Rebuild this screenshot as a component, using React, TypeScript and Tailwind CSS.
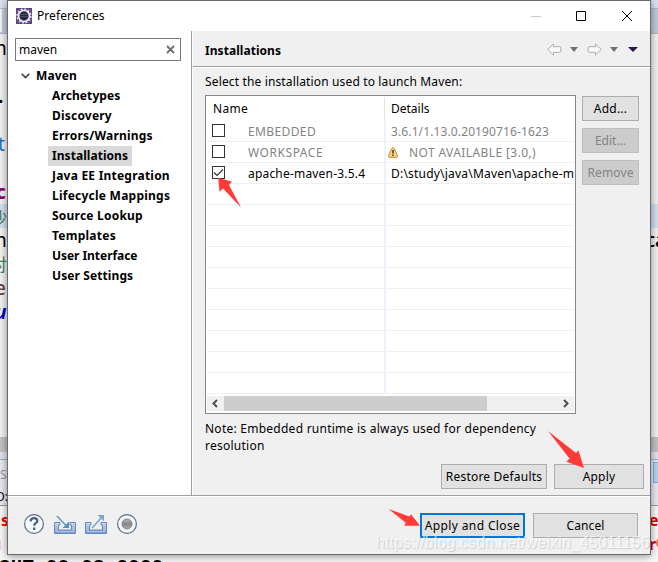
import React from "react";

const ui = "font-['Noto_Sans',sans-serif]";

const treeItems: { label: string; cls: string }[] = [
  { label: "Archetypes", cls: "w-[68px] tracking-[0.1px]" },
  { label: "Discovery", cls: "w-[60px] tracking-[0.2px]" },
  { label: "Errors/Warnings", cls: "w-[101px] tracking-[0.2px]" },
  { label: "Installations", cls: "w-[76px] tracking-[0.05px]" },
  { label: "Java EE Integration", cls: "w-[118px] tracking-[0.22px]" },
  { label: "Lifecycle Mappings", cls: "w-[118px] tracking-[0.24px]" },
  { label: "Source Lookup", cls: "w-[91px] tracking-[0.22px]" },
  { label: "Templates", cls: "w-[64px] tracking-[0.25px]" },
  { label: "User Interface", cls: "w-[85px] tracking-[-0.05px]" },
  { label: "User Settings", cls: "w-[81px] tracking-[0.1px]" },
];

function Btn({ children, className = "border border-[#adadad] bg-[#e1e1e1]" }: { children: React.ReactNode; className?: string }) {
  return (
    <button className={`flex h-[25px] items-center justify-center whitespace-nowrap pt-px ${className}`}>
      {children}
    </button>
  );
}

function Check({ on = false }: { on?: boolean }) {
  return (
    <span className="mb-px block size-[13px] shrink-0 border border-[#333] bg-white">
      {on && (
        <svg viewBox="0 0 11 11" className="block size-[11px]">
          <path d="M1 5.500l3 3L10 2.500" fill="none" stroke="#333" strokeWidth="1.2" />
        </svg>
      )}
    </span>
  );
}

function BackArrow({ flip = false }: { flip?: boolean }) {
  return (
    <svg viewBox="0 0 15 13" className={`h-[13px] w-[15px] ${flip ? "-scale-x-100" : ""}`}>
      <path d="M.8 6.500L6.500.9v2.800h6q1.400 0 1.400 1.200v3.200q0 1.200-1.400 1.200h-6v2.800z" fill="#f8f8f8" stroke="#adadad" />
    </svg>
  );
}

function Caret({ color, wide = false }: { color: string; wide?: boolean }) {
  return (
    <svg viewBox="0 0 9 5" preserveAspectRatio="none" className={`h-[5px] ${wide ? "w-[10px]" : "w-[8px]"}`}>
      <path d="M0 0h9L4.500 5z" fill={color} />
    </svg>
  );
}

function Background() {
  return (
    <div className="absolute inset-0 overflow-hidden bg-[#f0f0f0] text-[19px] leading-[24px]">
      <div className="h-[8px] bg-[#dbe0f0]" />
      <div className="h-[26px] border-y border-[#b4bac6] bg-[#bccbdb]" />
      <div className="h-[170px] bg-[#f2f2f2]" />
      <div className="h-[24px] bg-[#d4e0ee]" />
      <div className="h-[209px] bg-[#f2f2f2]" />
      <div className="h-[15px] bg-[#c2c2c2]" />
      <div className="h-[8px] border-b border-[#a8afbf] bg-[#dfe3ee]" />
      <div className="h-[46px] border-b border-[#999] bg-[#e7eaf3]" />
      <div className="h-[56px] bg-[#f8f8f8]" />
      <div className="absolute left-0 top-[9px] h-[23px] w-[2px] bg-[#f2f2f2]" />
      <span className="absolute left-[-5px] top-[36px]">n</span>
      <span className="absolute left-[-2px] top-[84px] font-bold">.</span>
      <span className="absolute left-[-2px] top-[132px] text-[#1a70d0]">t</span>
      <span className="absolute left-[-4px] top-[180px] font-bold text-[#8b006b]">c</span>
      <span className="absolute left-[-10px] top-[205px] font-['Noto_Sans_CJK_SC',sans-serif] text-[17px] text-[#3f7f5f]">沙</span>
      <span className="absolute left-[-5px] top-[228px]">n</span>
      <span className="absolute left-[-10px] top-[252px] font-['Noto_Sans_CJK_SC',sans-serif] text-[17px] text-[#3f7f5f]">对</span>
      <span className="absolute left-[-5px] top-[276px] font-medium text-[#6a3e3e]">e</span>
      <span className="absolute left-[-5px] top-[300px] font-bold italic text-[#0000c0]">u</span>
      <span className="absolute left-0 top-[463px] text-[12px] text-[#999]">S</span>
      <span className="absolute left-[-4px] top-[485px] text-[12px]">D:</span>
      <span className="absolute left-[1px] top-[508px] text-[16px] font-bold text-[#f00]">s</span>
      <span className="absolute left-0 top-[540px] h-[10px] w-px bg-[#f7c6f5]" />
      <span className="absolute left-[646px] top-[228px] font-medium">c</span>
      <span className="absolute left-[655px] top-[228px] font-medium">a</span>
      <div className="absolute left-[653px] top-[462px] h-[21px] w-[10px] border border-[#7fb0dc] bg-[#b4d4f2]" />
      <span className="absolute left-[649px] top-[508px] text-[16px] font-bold text-[#e00000]">e</span>
      <span className="absolute left-[649px] top-[532px] text-[16px] font-bold text-[#e00000]">r</span>
      <span className="absolute left-[656px] top-[537px] h-[12px] w-[6px] rounded-l-full bg-[#ff7032]" />
      <span className="absolute left-[-1px] top-[555px] whitespace-pre font-['Liberation_Mono',monospace] text-[19px] font-bold tracking-[0.35px]">SHT 03 08 2020</span>
    </div>
  );
}

function FooterIcons() {
  return (
    <svg viewBox="23 513 116 22" className="h-[22px] w-[116px]" fill="none">
      <defs>
        <linearGradient id="tray" x1="0" y1="0" x2="0" y2="1">
          <stop stopColor="#d6e0f0" />
          <stop offset="1" stopColor="#7c9ccb" />
        </linearGradient>
        <linearGradient id="knob" x1="0" y1="0" x2="0" y2="1">
          <stop stopColor="#bababa" />
          <stop offset=".5" stopColor="#858585" />
          <stop offset="1" stopColor="#b0b0b0" />
        </linearGradient>
      </defs>
      <circle cx="34" cy="524" r="9.400" fill="#f5f7fb" stroke="#586d91" strokeWidth="1.200" />
      <path d="M30.600 521.300q.3-3.200 3.500-3.200 3.200 0 3.200 2.700 0 1.500-1.700 2.500-1.400.8-1.400 2.400M34.200 527.500v2.400" stroke="#4b5f86" strokeWidth="2.200" />
      {[54, 85].map((x) => (
        <g key={x} transform={`translate(${x} 522)`}>
          <path d="M.5.500h5.500v2.500H4.500v5h13V3H16V.5h5.500v11H.5z" fill="url(#tray)" stroke="#6787bd" />
          <path d="M2.500 2.500v7h17v-7" stroke="#a9c0e0" />
        </g>
      ))}
      <path d="M57 516l10 10.500" stroke="#5c9dc0" strokeWidth="1.500" />
      <path d="M69 521.500v6.500h-6.500z" fill="#4f94b8" />
      <path d="M92 528l9.500-10.500" stroke="#6da5cc" strokeWidth="1.500" />
      <path d="M97.500 515h6.500v6.500z" fill="#78a9d2" />
      <circle cx="127" cy="524" r="9.400" fill="#f7f7f7" stroke="#586d91" strokeWidth="1.200" />
      <circle cx="127" cy="524" r="5" fill="url(#knob)" stroke="#858585" />
    </svg>
  );
}

export default function App() {
  return (
    <div className={`relative h-[562px] w-[658px] overflow-hidden text-[12px] leading-[18px] text-black ${ui}`}>
      <Background />
      <div className="relative ml-[7px] flex h-[555px] w-[644px] flex-col border border-[#6b686e] bg-[#f0f0f0] shadow-[0_1px_8px_rgba(0,0,0,0.45)]">
        <header className="flex h-[30px] shrink-0 items-center bg-white pl-[8px]">
          <svg viewBox="0 0 16 16" className="size-4">
            <rect width="16" height="16" fill="#5b4884" />
            <circle cx="8" cy="8" r="5.500" fill="#2b2648" stroke="#f0edf0" strokeWidth="1.700" />
            <circle cx="8" cy="8" r="6.900" fill="none" stroke="#e6e3e8" strokeWidth="1.400" strokeDasharray="2 1.610" />
            <path d="M4 6.500h8M4 8.500h8" stroke="#69648c" strokeWidth=".6" />
          </svg>
          <span className="ml-[5px] tracking-[0.07px]">Preferences</span>
          <svg viewBox="0 0 104 12" className="ml-auto mr-[15px] h-[12px] w-[104px]">
            <path d="M0 6.500h10" stroke="#c8c8c8" />
            <path d="M45.500 1.500h9v9h-9z" fill="none" stroke="#000" />
            <path d="M91 1l10 10M101 1l-10 10" stroke="#000" />
          </svg>
        </header>
        <div className="flex h-[464px] shrink-0">
          <aside className="w-[184px] shrink-0 border-r border-[#a0a0a0] bg-white pt-[7px]">
            <div className="ml-[7px] flex h-[23px] w-[166px] items-center border border-[#7a7a7a] pl-[3px] pr-[5px]">
              <span>maven</span>
              <svg viewBox="0 0 9 9" className="ml-auto size-[9px]">
                <path d="M1 1l7 7M8 1L1 8" stroke="#6e6e6e" strokeWidth="1.800" />
              </svg>
            </div>
            <div className="mt-[5px] font-bold">
              <div className="flex h-5 items-center pl-[13px]">
                <svg viewBox="0 0 9 6" className="h-[6px] w-[9px]">
                  <path d="M.7.8l3.800 3.800L8.300.8" fill="none" stroke="#404040" strokeWidth="1.600" />
                </svg>
                <span className="ml-[6px] tracking-[0.1px]">Maven</span>
              </div>
              {treeItems.map((t) => (
                <div key={t.label} className="flex h-5 items-center pl-[40px]">
                  <span className={`box-content whitespace-nowrap px-1 leading-[20px] ${t.cls} ${t.label === "Installations" ? "bg-[#d9d9d9]" : ""}`}>
                    {t.label}
                  </span>
                </div>
              ))}
            </div>
          </aside>
          <main className="flex min-w-0 flex-1 flex-col border-l border-white">
            <div className="flex h-[36px] items-center border-b border-[#a0a0a0] pl-[12px] pr-[12px]">
              <h1 className="pt-[4px] font-bold tracking-[0.05px]">Installations</h1>
              <div className="ml-auto flex items-center pt-px">
                <span className="-ml-px"><BackArrow /></span>
                <span className="ml-[8px]"><Caret color="#707070" /></span>
                <span className="ml-[9px]"><BackArrow flip /></span>
                <span className="ml-[8px]"><Caret color="#707070" /></span>
                <span className="ml-[10px]"><Caret color="#2d1650" wide /></span>
              </div>
            </div>
            <div className="border-t border-white pl-[12px] pt-[5px]">
              <p className="h-[22px] tracking-[0.145px]">Select the installation used to launch Maven:</p>
              <div className="flex">
                <div className="h-[319px] w-[371px] shrink-0 border border-[#828790] bg-white p-px">
                  <div className="flex h-[24px] items-center">
                    <span className="w-[177px] pl-[6px] tracking-[0.3px]">Name</span>
                    <span className="h-full border-l border-[#e5e5e5] pl-[6px] leading-[24px]">Details</span>
                  </div>
                  <div className="grid grid-cols-[177px_190px] whitespace-nowrap">
                    <div className="flex h-[21px] items-center border-b border-[#f0f0f0] pl-[5px] text-[#838383]"><Check /><span className="ml-[23px] pt-px tracking-[0.38px]">EMBEDDED</span></div>
                    <div className="flex h-[21px] items-center overflow-hidden border-b border-l-2 border-b-[#f0f0f0] border-l-[#edf3fc] pl-[5px] pt-px tracking-[0.12px] text-[#838383]">3.6.1/1.13.0.20190716-1623</div>
                    <div className="flex h-[21px] items-center border-b border-[#f0f0f0] pl-[5px] text-[#838383]"><Check /><span className="ml-[23px] pt-[2px] tracking-[0.55px]">WORKSPACE</span></div>
                    <div className="flex h-[21px] items-center overflow-hidden border-b border-l-2 border-b-[#f0f0f0] border-l-[#edf3fc] pl-[2px] text-[#838383]">
                      <svg viewBox="0 0 10 11" className="h-[11px] w-[10px]">
                        <path d="M3.800 1.500Q5-.3 6.200 1.500L9.300 8.200Q9.800 10.400 8.300 10.400H1.700Q.2 10.400.7 8.200z" fill="#f6d68a" stroke="#c28a2c" />
                        <path d="M5 3v3.600M5 7.600v1.400" stroke="#4a3510" strokeWidth="1.500" />
                      </svg>
                      <span className="ml-[11px] pt-[2px] tracking-[0.4px]">NOT AVAILABLE [3.0,)</span>
                    </div>
                    <div className="flex h-[21px] items-center border-b border-[#f0f0f0] pl-[5px]"><Check on /><span className="ml-[23px] pt-[2px] tracking-[0.19px]">apache-maven-3.5.4</span></div>
                    <div className="flex h-[21px] items-center overflow-hidden border-b border-l-2 border-b-[#f0f0f0] border-l-[#edf3fc] pl-[5px] pt-[2px] tracking-[0.21px]">D:\study\java\Maven\apache-m</div>
                    {Array.from({ length: 10 }, (_, i) => (
                      <React.Fragment key={i}>
                        <div className="h-[21px] border-b border-[#f0f0f0]" />
                        <div className="h-[21px] border-b border-l-2 border-b-[#f0f0f0] border-l-[#edf3fc]" />
                      </React.Fragment>
                    ))}
                  </div>
                  <div className="mt-[2px] flex h-[15px] items-center bg-[#f0f0f0]">
                    <svg viewBox="0 0 17 15" className="h-[15px] w-[17px]"><path d="M10 4L6.500 7.500 10 11" fill="none" stroke="#505050" strokeWidth="2" /></svg>
                    <div className="h-full w-[263px] bg-[#cdcdcd]" />
                    <svg viewBox="0 0 17 15" className="ml-auto h-[15px] w-[17px]"><path d="M7 4l3.500 3.500L7 11" fill="none" stroke="#505050" strokeWidth="2" /></svg>
                  </div>
                </div>
                <div className="ml-[6px] flex w-[57px] flex-col gap-[7px] pt-px">
                  <Btn className="border border-[#adadad] bg-[#e1e1e1] tracking-[0.2px]">Add...</Btn>
                  <Btn className="border border-[#bfbfbf] bg-[#cccccc] text-[#838383]">Edit...</Btn>
                  <Btn className="border border-[#bfbfbf] bg-[#cccccc] tracking-[0.15px] text-[#838383]">Remove</Btn>
                </div>
              </div>
              <p className="mt-[5px] w-[360px] pt-px leading-[17px] tracking-[0.25px]">Note: Embedded runtime is always used for dependency<br />resolution</p>
              <div className="mt-[10px] flex justify-end gap-[7px] pr-[6px]">
                <Btn className="w-[106px] border border-[#adadad] bg-[#e1e1e1] tracking-[0.2px]">Restore Defaults</Btn>
                <Btn className="w-[90px] border border-[#adadad] bg-[#e1e1e1] tracking-[0.2px]">Apply</Btn>
              </div>
            </div>
          </main>
        </div>
        <footer className="flex flex-1 items-start border-t border-[#a0a0a0] pl-[15px] pr-[12px] pt-[17px] shadow-[inset_0_1px_0_#fff]">
          <FooterIcons />
          <div className="ml-auto flex gap-[8px]">
            <Btn className="w-[105px] border-2 border-[#0078d7] bg-[#e1e1e1] tracking-[0.37px]">Apply and Close</Btn>
            <Btn className="w-[105px] border border-[#adadad] bg-[#e1e1e1] tracking-[0.1px]">Cancel</Btn>
          </div>
        </footer>
      </div>
      <svg viewBox="0 0 658 562" className="pointer-events-none absolute inset-0 h-[562px] w-[658px]" fill="#ff3b38">
        <path d="M218.300 177.800L232 181.700L229 185L241 207.500L223 188.500L219.500 191.700z" />
        <path d="M548 431L576 453L578.500 450.500L584 468L566.500 461.700L569.500 458.500z" />
        <path d="M388.700 509L409.300 516.500L411 514.200L420 525.800L404.500 525.800L405.700 522.700z" />
      </svg>
      <span className="absolute left-[376px] top-[533px] whitespace-nowrap font-['Liberation_Sans',sans-serif] text-[16px] leading-[20px] tracking-[0.1px] text-white/65 [text-shadow:1px_1px_1px_rgba(130,130,130,0.3)]">
        https://blog.csdn.net/weixin_45011156
      </span>
    </div>
  );
}
